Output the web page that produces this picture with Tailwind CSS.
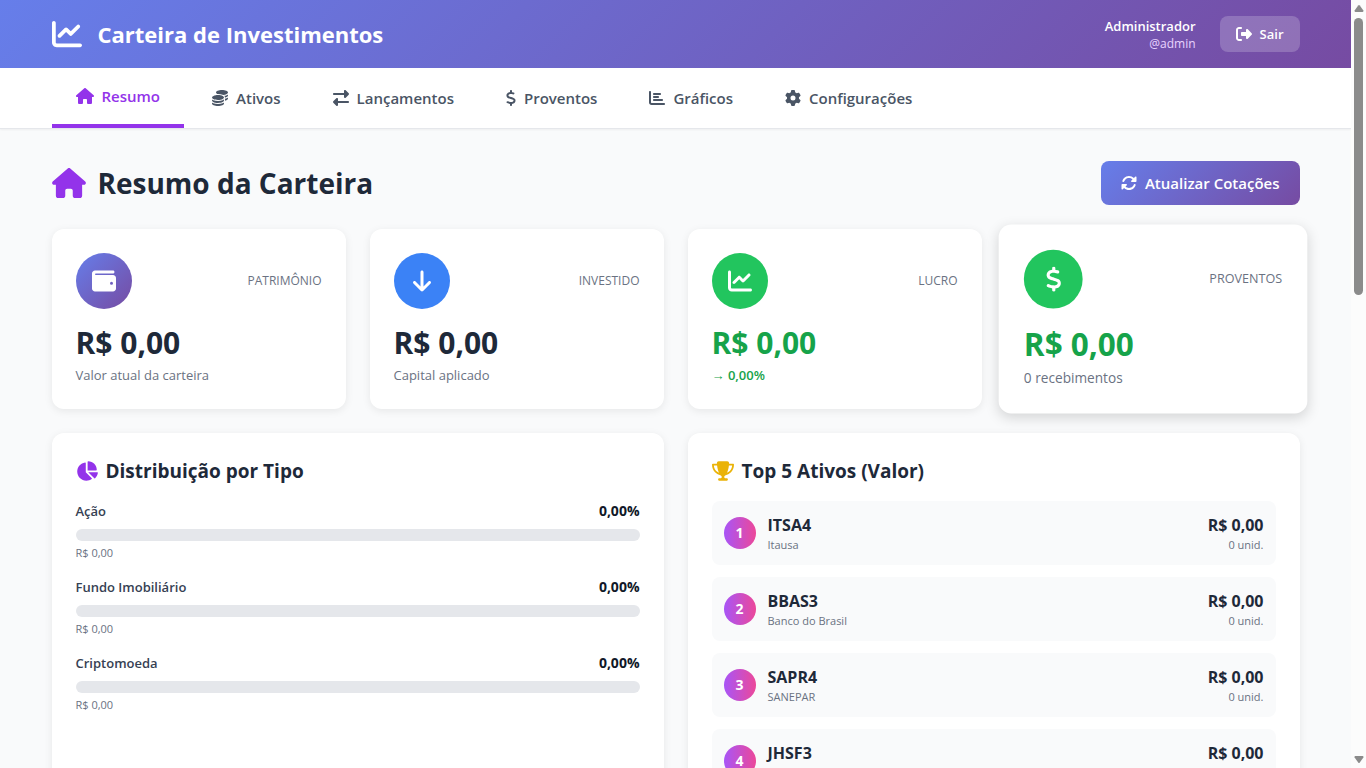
<!DOCTYPE html>
<html lang="pt-BR">
  <head>
    <meta charset="UTF-8" />
    <meta name="viewport" content="width=device-width, initial-scale=1.0" />
    <title>Carteira de Investimentos</title>
    <script src="https://cdn.jsdelivr.net/npm/@tailwindcss/browser@4"></script>
  </head>
  <body
    class="flex h-screen overflow-hidden bg-gray-50 font-['Open_Sans','Noto_Sans',sans-serif] text-[15px] leading-6 text-gray-800"
  >
    <!-- Shared icons -->
    <svg class="hidden" aria-hidden="true">
      <symbol id="icon-chart-line" viewBox="0 0 512 512">
        <path
          d="M64 64c0-17.7-14.3-32-32-32S0 46.3 0 64V400c0 44.2 35.8 80 80 80H480c17.7 0 32-14.3 32-32s-14.3-32-32-32H80c-8.8 0-16-7.2-16-16V64zm406.6 86.6c12.5-12.5 12.5-32.8 0-45.3s-32.8-12.5-45.3 0L320 210.7l-57.4-57.4c-12.5-12.5-32.8-12.5-45.3 0l-112 112c-12.5 12.5-12.5 32.8 0 45.3s32.8 12.5 45.3 0L240 221.3l57.4 57.4c12.5 12.5 32.8 12.5 45.3 0l128-128z"
        />
      </symbol>
      <symbol id="icon-home" viewBox="0 0 576 512">
        <path
          d="M575.8 255.5c0 18-15 32.1-32 32.1h-32l.7 160.2c0 2.7-.2 5.4-.5 8.1V472c0 22.1-17.9 40-40 40H456c-1.1 0-2.2 0-3.3-.1c-1.4 .1-2.8 .1-4.2 .1H416 392c-22.1 0-40-17.9-40-40V448 384c0-17.7-14.3-32-32-32H256c-17.7 0-32 14.3-32 32v64 24c0 22.1-17.9 40-40 40H160 128.1c-1.5 0-3-.1-4.5-.2c-1.2 .1-2.4 .2-3.6 .2H104c-22.1 0-40-17.9-40-40V360c0-.9 0-1.9 .1-2.8V287.6H32c-18 0-32-14-32-32.1c0-9 3-17 10-24L266.4 8c7-7 15-8 22-8s15 2 21 7L564.8 231.5c8 7 12 15 11 24z"
        />
      </symbol>
      <symbol id="icon-dollar" viewBox="0 0 320 512">
        <path
          d="M160 0c17.7 0 32 14.3 32 32V67.7c1.6 .2 3.1 .4 4.7 .7c.4 .1 .7 .1 1.1 .2l48 8.8c17.4 3.2 28.9 19.9 25.7 37.2s-19.9 28.9-37.2 25.7l-47.5-8.7c-31.3-4.6-58.9-1.5-78.3 6.2s-27.2 18.3-29 28.1c-2 10.7-.5 16.7 1.2 20.4c1.8 3.9 5.5 8.3 12.8 13.2c16.3 10.7 41.3 17.7 73.7 26.3l2.9 .8c28.6 7.6 63.6 16.8 89.6 33.8c14.2 9.3 27.6 21.9 35.9 39.5c8.5 17.9 10.3 37.9 6.4 59.2c-6.9 38-33.1 63.4-65.6 76.7c-13.7 5.6-28.6 9.2-44.4 11V480c0 17.7-14.3 32-32 32s-32-14.3-32-32V445.1c-.4-.1-.9-.1-1.3-.2l-.2 0 0 0c-24.4-3.8-64.5-14.3-91.5-26.3c-16.1-7.2-23.4-26.1-16.2-42.2s26.1-23.4 42.2-16.2c20.9 9.3 55.3 18.5 75.2 21.6c31.9 4.7 58.2 2 76-5.3c16.9-6.9 24.6-16.9 26.8-28.9c1.9-10.6 .4-16.7-1.3-20.4c-1.9-4-5.6-8.4-13-13.3c-16.4-10.7-41.5-17.7-74-26.3l-2.8-.7 0 0C119.4 279.3 84.4 270 58.4 253c-14.2-9.3-27.5-22-35.8-39.6c-8.4-17.9-10.1-37.9-6.1-59.2C23.7 116 52.3 91.2 84.8 78.3c13.3-5.3 27.9-8.9 43.2-11V32c0-17.7 14.3-32 32-32z"
        />
      </symbol>
    </svg>

    <div class="min-w-0 flex-1 overflow-y-auto [scrollbar-width:none]">
      <!-- Header -->
      <header class="bg-[linear-gradient(135deg,#667eea_0%,#764ba2_100%)] text-white">
        <div class="mx-auto flex max-w-7xl items-center justify-between px-4 py-4">
          <div class="flex items-center gap-4">
            <svg class="size-[30px]" fill="currentColor"><use href="#icon-chart-line" /></svg>
            <span class="text-[22px] font-bold">Carteira de Investimentos</span>
          </div>
          <div class="flex items-center gap-6">
            <div class="text-right">
              <p class="text-[13px] leading-5 font-semibold">Administrador</p>
              <p class="text-[12px] leading-4 text-purple-200">@admin</p>
            </div>
            <button
              type="button"
              class="flex items-center gap-2 rounded-lg bg-white/20 px-4 py-2 text-[13px] leading-5 font-semibold hover:bg-white/30"
            >
              <svg class="size-4" viewBox="0 0 512 512" fill="currentColor">
                <path
                  d="M377.9 105.9L500.7 228.7c7.2 7.2 11.3 17.1 11.3 27.3s-4.1 20.1-11.3 27.3L377.9 406.1c-6.4 6.4-15 9.9-24 9.9c-18.7 0-33.9-15.2-33.9-33.9l0-62.1-128 0c-17.7 0-32-14.3-32-32l0-64c0-17.7 14.3-32 32-32l128 0 0-62.1c0-18.7 15.2-33.9 33.9-33.9c9 0 17.6 3.6 24 9.9zM160 96L96 96c-17.7 0-32 14.3-32 32l0 256c0 17.7 14.3 32 32 32l64 0c17.7 0 32 14.3 32 32s-14.3 32-32 32l-64 0c-53 0-96-43-96-96L0 128C0 75 43 32 96 32l64 0c17.7 0 32 14.3 32 32s-14.3 32-32 32z"
                />
              </svg>
              Sair
            </button>
          </div>
        </div>
      </header>

      <!-- Navigation -->
      <nav class="border-b border-gray-200 bg-white shadow-[0_1px_2px_rgba(0,0,0,0.05)]">
        <div class="mx-auto flex max-w-7xl gap-1 px-4 font-semibold whitespace-nowrap text-gray-600">
          <button
            type="button"
            class="flex items-center gap-2 border-b-4 border-[#9333ea] px-6 py-4 text-[#9333ea]"
          >
            <svg class="h-4 w-[18px]" fill="currentColor"><use href="#icon-home" /></svg>
            Resumo
          </button>
          <button type="button" class="flex items-center gap-2 px-6 py-4 hover:text-[#9333ea]">
            <svg class="size-4" viewBox="0 0 512 512" fill="currentColor">
              <path
                d="M512 80c0 18-14.3 34.6-38.4 48c-29.1 16.1-72.5 27.5-122.3 30.9c-3.7-1.8-7.4-3.5-11.3-5C300.6 137.4 248.2 128 192 128c-8.3 0-16.4 .2-24.5 .6l-1.1-.6C142.3 114.6 128 98 128 80c0-44.2 86-80 192-80S512 35.8 512 80zM160.7 161.1c10.2-.7 20.7-1.1 31.3-1.1c62.2 0 117.4 12.3 152.5 31.4C369.3 204.9 384 221.7 384 240c0 4-.7 7.9-2.1 11.7c-4.6 13.2-17 25.3-35 35.5c0 0 0 0 0 0c-.1 .1-.3 .1-.4 .2c-.3 .2-.6 .3-.9 .5c-35 19.4-90.8 32-153.6 32c-59.6 0-112.9-11.3-148.2-29.1c-1.9-.9-3.7-1.9-5.5-2.9C14.3 274.6 0 258 0 240c0-34.8 53.4-64.5 128-75.4c10.5-1.5 21.4-2.7 32.7-3.5zM416 240c0-21.9-10.6-39.9-24.1-53.4c28.3-4.4 54.2-11.4 76.2-20.5c16.3-6.8 31.5-15.2 43.9-25.5V176c0 19.3-16.5 37.1-43.8 50.9c-14.6 7.4-32.4 13.7-52.4 18.5c.1-1.8 .2-3.5 .2-5.3zm-32 96c0 18-14.3 34.6-38.4 48c-1.8 1-3.6 1.9-5.5 2.9C304.9 404.7 251.6 416 192 416c-62.8 0-118.6-12.6-153.6-32C14.3 370.6 0 354 0 336V300.6c12.5 10.3 27.6 18.7 43.9 25.5C83.4 342.6 135.8 352 192 352s108.6-9.4 148.1-25.9c7.8-3.2 15.3-6.9 22.4-10.9c6.1-3.4 11.8-7.2 17.2-11.2c1.5-1.1 2.9-2.3 4.3-3.4V304v5.7V336zm32 0V304 278.1c19-4.2 36.5-9.5 52.1-16c16.3-6.8 31.5-15.2 43.9-25.5V272c0 10.5-5 21-14.9 30.9c-16.3 16.3-45 29.7-81.3 38.4c.1-1.7 .2-3.5 .2-5.3zM192 448c56.2 0 108.6-9.4 148.1-25.9c16.3-6.8 31.5-15.2 43.9-25.5V432c0 44.2-86 80-192 80S0 476.2 0 432V396.6c12.5 10.3 27.6 18.7 43.9 25.5C83.4 438.6 135.8 448 192 448z"
              />
            </svg>
            Ativos
          </button>
          <button type="button" class="flex items-center gap-2 px-6 py-4 hover:text-[#9333ea]">
            <svg class="size-4" viewBox="0 0 512 512" fill="currentColor">
              <path
                d="M32 96l320 0V32c0-12.9 7.8-24.6 19.8-29.6s25.7-2.2 34.9 6.9l96 96c6 6 9.4 14.1 9.4 22.6s-3.4 16.6-9.4 22.6l-96 96c-9.2 9.2-22.9 11.9-34.9 6.9s-19.8-16.6-19.8-29.6V160L32 160c-17.7 0-32-14.3-32-32s14.3-32 32-32zM480 352c17.7 0 32 14.3 32 32s-14.3 32-32 32H160v64c0 12.9-7.8 24.6-19.8 29.6s-25.7 2.2-34.9-6.9l-96-96c-6-6-9.4-14.1-9.4-22.6s3.4-16.6 9.4-22.6l96-96c9.2-9.2 22.9-11.9 34.9-6.9s19.8 16.6 19.8 29.6l0 64H480z"
              />
            </svg>
            Lançamentos
          </button>
          <button type="button" class="flex items-center gap-2 px-6 py-4 hover:text-[#9333ea]">
            <svg class="h-4 w-[10px]" fill="currentColor"><use href="#icon-dollar" /></svg>
            Proventos
          </button>
          <button type="button" class="flex items-center gap-2 px-6 py-4 hover:text-[#9333ea]">
            <svg class="size-4" viewBox="0 0 512 512" fill="currentColor">
              <path
                d="M32 32c17.7 0 32 14.3 32 32V400c0 8.8 7.2 16 16 16H480c17.7 0 32 14.3 32 32s-14.3 32-32 32H80c-44.2 0-80-35.8-80-80V64C0 46.3 14.3 32 32 32zm96 96c0-17.7 14.3-32 32-32l192 0c17.7 0 32 14.3 32 32s-14.3 32-32 32H160c-17.7 0-32-14.3-32-32zm32 64H288c17.7 0 32 14.3 32 32s-14.3 32-32 32H160c-17.7 0-32-14.3-32-32s14.3-32 32-32zm0 96H416c17.7 0 32 14.3 32 32s-14.3 32-32 32H160c-17.7 0-32-14.3-32-32s14.3-32 32-32z"
              />
            </svg>
            Gráficos
          </button>
          <button type="button" class="flex items-center gap-2 px-6 py-4 hover:text-[#9333ea]">
            <svg class="size-4" viewBox="0 0 512 512" fill="currentColor">
              <path
                d="M495.9 166.6c3.2 8.7 .5 18.4-6.4 24.6l-43.3 39.4c1.1 8.3 1.7 16.8 1.7 25.4s-.6 17.1-1.7 25.4l43.3 39.4c6.9 6.2 9.6 15.9 6.4 24.6c-4.4 11.9-9.7 23.3-15.8 34.3l-4.7 8.1c-6.6 11-14 21.4-22.1 31.2c-5.9 7.2-15.7 9.6-24.5 6.8l-55.7-17.7c-13.4 10.3-28.2 18.9-44 25.4l-12.5 57.1c-2 9.1-9 16.3-18.2 17.8c-13.8 2.3-28 3.5-42.5 3.5s-28.7-1.2-42.5-3.5c-9.2-1.5-16.2-8.7-18.2-17.8l-12.5-57.1c-15.8-6.5-30.6-15.1-44-25.4L83.1 425.9c-8.8 2.8-18.6 .3-24.5-6.8c-8.1-9.8-15.5-20.2-22.1-31.2l-4.7-8.1c-6.1-11-11.4-22.4-15.8-34.3c-3.2-8.7-.5-18.4 6.4-24.6l43.3-39.4C64.6 273.1 64 264.6 64 256s.6-17.1 1.7-25.4L22.4 191.2c-6.9-6.2-9.6-15.9-6.4-24.6c4.4-11.9 9.7-23.3 15.8-34.3l4.7-8.1c6.6-11 14-21.4 22.1-31.2c5.9-7.2 15.7-9.6 24.5-6.8l55.7 17.7c13.4-10.3 28.2-18.9 44-25.4l12.5-57.1c2-9.1 9-16.3 18.2-17.8C227.3 1.2 241.5 0 256 0s28.7 1.2 42.5 3.5c9.2 1.5 16.2 8.7 18.2 17.8l12.5 57.1c15.8 6.5 30.6 15.1 44 25.4l55.7-17.7c8.8-2.8 18.6-.3 24.5 6.8c8.1 9.8 15.5 20.2 22.1 31.2l4.7 8.1c6.1 11 11.4 22.4 15.8 34.3zM256 336a80 80 0 1 0 0-160 80 80 0 1 0 0 160z"
              />
            </svg>
            Configurações
          </button>
        </div>
      </nav>

      <main class="mx-auto max-w-7xl space-y-6 px-4 py-8">
        <div class="flex items-center justify-between">
          <h1 class="flex items-center gap-3 text-[28px] leading-9 font-bold">
            <svg class="h-[30px] w-[34px] text-[#9333ea]" fill="currentColor">
              <use href="#icon-home" />
            </svg>
            Resumo da Carteira
          </h1>
          <button
            type="button"
            class="flex items-center gap-2 rounded-lg bg-[linear-gradient(135deg,#667eea_0%,#764ba2_100%)] px-5 py-2.5 font-semibold text-white"
          >
            <svg class="size-4" viewBox="0 0 512 512" fill="currentColor">
              <path
                d="M142.9 142.9c62.2-62.2 162.7-62.5 225.3-1L327 183c-6.9 6.9-8.9 17.2-5.2 26.2s12.5 14.8 22.2 14.8H463.5c0 0 0 0 0 0H472c13.3 0 24-10.7 24-24V72c0-9.7-5.8-18.5-14.8-22.2s-19.3-1.7-26.2 5.2L413.4 96.6c-87.6-86.5-228.7-86.2-315.8 1C73.2 122 55.6 150.7 44.8 181.4c-5.9 16.7 2.9 34.9 19.5 40.8s34.9-2.9 40.8-19.5c7.7-21.8 20.2-42.3 37.8-59.8zM16 312v7.6 .7V440c0 9.7 5.8 18.5 14.8 22.2s19.3 1.7 26.2-5.2l41.6-41.6c87.6 86.5 228.7 86.2 315.8-1c24.4-24.4 42.1-53.1 52.9-83.7c5.9-16.7-2.9-34.9-19.5-40.8s-34.9 2.9-40.8 19.5c-7.7 21.8-20.2 42.3-37.8 59.8c-62.2 62.2-162.7 62.5-225.3 1L185 329c6.9-6.9 8.9-17.2 5.2-26.2s-12.5-14.8-22.2-14.8H48.4h-.7H40c-13.3 0-24 10.7-24 24z"
              />
            </svg>
            Atualizar Cotações
          </button>
        </div>

        <!-- Summary cards -->
        <div class="grid grid-cols-1 gap-6 md:grid-cols-2 lg:grid-cols-4">
          <div class="rounded-xl bg-white p-6 shadow-[0_2px_8px_rgba(0,0,0,0.08)]">
            <div class="mb-4 flex items-center justify-between">
              <div
                class="flex size-14 items-center justify-center rounded-full bg-[linear-gradient(135deg,#667eea_0%,#764ba2_100%)] text-white"
              >
                <svg class="size-6" viewBox="0 0 512 512" fill="currentColor">
                  <path
                    d="M64 32C28.7 32 0 60.7 0 96V416c0 35.3 28.7 64 64 64H448c35.3 0 64-28.7 64-64V192c0-35.3-28.7-64-64-64H80c-8.8 0-16-7.2-16-16s7.2-16 16-16H448c17.7 0 32-14.3 32-32s-14.3-32-32-32H64zM416 272a32 32 0 1 1 0 64 32 32 0 1 1 0-64z"
                  />
                </svg>
              </div>
              <span class="text-[12px] leading-4 font-medium text-gray-500 uppercase">Patrimônio</span>
            </div>
            <p class="text-[30px] leading-9 font-bold">R$ 0,00</p>
            <p class="mt-1 text-[13px] leading-5 text-gray-500">Valor atual da carteira</p>
          </div>

          <div class="rounded-xl bg-white p-6 shadow-[0_2px_8px_rgba(0,0,0,0.08)]">
            <div class="mb-4 flex items-center justify-between">
              <div class="flex size-14 items-center justify-center rounded-full bg-[#3b82f6] text-white">
                <svg class="h-6 w-[18px]" viewBox="0 0 384 512" fill="currentColor">
                  <path
                    d="M169.4 470.6c12.5 12.5 32.8 12.5 45.3 0l160-160c12.5-12.5 12.5-32.8 0-45.3s-32.8-12.5-45.3 0L224 370.8 224 64c0-17.7-14.3-32-32-32s-32 14.3-32 32l0 306.7L54.6 265.4c-12.5-12.5-32.8-12.5-45.3 0s-12.5 32.8 0 45.3l160 160z"
                  />
                </svg>
              </div>
              <span class="text-[12px] leading-4 font-medium text-gray-500 uppercase">Investido</span>
            </div>
            <p class="text-[30px] leading-9 font-bold">R$ 0,00</p>
            <p class="mt-1 text-[13px] leading-5 text-gray-500">Capital aplicado</p>
          </div>

          <div class="rounded-xl bg-white p-6 shadow-[0_2px_8px_rgba(0,0,0,0.08)]">
            <div class="mb-4 flex items-center justify-between">
              <div class="flex size-14 items-center justify-center rounded-full bg-[#22c55e] text-white">
                <svg class="size-6" fill="currentColor"><use href="#icon-chart-line" /></svg>
              </div>
              <span class="text-[12px] leading-4 font-medium text-gray-500 uppercase">Lucro</span>
            </div>
            <p class="text-[30px] leading-9 font-bold text-[#16a34a]">R$ 0,00</p>
            <p class="mt-1 text-[13px] leading-5 font-semibold text-[#16a34a]">→ 0,00%</p>
          </div>

          <!-- Raised card -->
          <div class="scale-105 rounded-xl bg-white p-6 shadow-[0_4px_12px_rgba(0,0,0,0.15)]">
            <div class="mb-4 flex items-center justify-between">
              <div class="flex size-14 items-center justify-center rounded-full bg-[#22c55e] text-white">
                <svg class="h-6 w-[15px]" fill="currentColor"><use href="#icon-dollar" /></svg>
              </div>
              <span class="text-[12px] leading-4 font-medium text-gray-500 uppercase">Proventos</span>
            </div>
            <p class="text-[30px] leading-9 font-bold text-[#16a34a]">R$ 0,00</p>
            <p class="mt-1 text-[13px] leading-5 text-gray-500">0 recebimentos</p>
          </div>
        </div>

        <div class="grid grid-cols-1 gap-6 lg:grid-cols-2">
          <!-- Distribution by type -->
          <section class="rounded-xl bg-white p-6 shadow-[0_2px_8px_rgba(0,0,0,0.08)]">
            <h2 class="mb-4 flex items-center gap-2 text-[19px] leading-7 font-bold">
              <svg class="h-5 w-[22px] text-[#9333ea]" viewBox="0 0 576 512" fill="currentColor">
                <path
                  d="M304 240V16.6c0-9 7-16.6 16-16.6C443.7 0 544 100.3 544 224c0 9-7.6 16-16.6 16H304zM32 272C32 150.7 122.1 50.3 239 34.3c9.2-1.3 17 6.1 17 15.4V288L412.5 444.5c6.7 6.7 6.2 17.7-1.5 23.1C371.8 495.6 323.8 512 272 512C139.5 512 32 404.6 32 272zm526.4 16c9.3 0 16.6 7.8 15.4 17c-7.7 55.9-34.6 105.6-73.9 142.3c-6 5.6-15.4 5.2-21.2-.7L320 288H558.4z"
                />
              </svg>
              Distribuição por Tipo
            </h2>
            <div class="space-y-4">
              <div>
                <div class="mb-2 flex justify-between leading-5">
                  <span class="text-[13px] font-semibold text-gray-700">Ação</span>
                  <span class="text-[14px] font-bold text-gray-900">0,00%</span>
                </div>
                <div class="h-3 overflow-hidden rounded-full bg-gray-200">
                  <div class="h-full bg-[#a855f7]" style="width: 0%"></div>
                </div>
                <p class="mt-1 text-[11px] leading-4 text-gray-500">R$ 0,00</p>
              </div>
              <div>
                <div class="mb-2 flex justify-between leading-5">
                  <span class="text-[13px] font-semibold text-gray-700">Fundo Imobiliário</span>
                  <span class="text-[14px] font-bold text-gray-900">0,00%</span>
                </div>
                <div class="h-3 overflow-hidden rounded-full bg-gray-200">
                  <div class="h-full bg-[#a855f7]" style="width: 0%"></div>
                </div>
                <p class="mt-1 text-[11px] leading-4 text-gray-500">R$ 0,00</p>
              </div>
              <div>
                <div class="mb-2 flex justify-between leading-5">
                  <span class="text-[13px] font-semibold text-gray-700">Criptomoeda</span>
                  <span class="text-[14px] font-bold text-gray-900">0,00%</span>
                </div>
                <div class="h-3 overflow-hidden rounded-full bg-gray-200">
                  <div class="h-full bg-[#a855f7]" style="width: 0%"></div>
                </div>
                <p class="mt-1 text-[11px] leading-4 text-gray-500">R$ 0,00</p>
              </div>
            </div>
          </section>

          <!-- Top assets -->
          <section class="rounded-xl bg-white p-6 shadow-[0_2px_8px_rgba(0,0,0,0.08)]">
            <h2 class="mb-4 flex items-center gap-2 text-[19px] leading-7 font-bold">
              <svg class="h-5 w-[22px] text-[#eab308]" viewBox="0 0 576 512" fill="currentColor">
                <path
                  d="M400 0H176c-26.5 0-48.1 21.8-47.1 48.2c.2 5.3 .4 10.6 .7 15.8H24C10.7 64 0 74.7 0 88c0 92.6 33.5 157 78.5 200.7c44.3 43.1 98.3 64.8 138.1 75.8c23.4 6.5 39.4 26 39.4 45.6c0 20.9-17 37.9-37.9 37.9H192c-17.7 0-32 14.3-32 32s14.3 32 32 32H384c17.7 0 32-14.3 32-32s-14.3-32-32-32H357.9C337 448 320 431 320 410.1c0-19.6 15.9-39.2 39.4-45.6c39.9-11 93.9-32.7 138.2-75.8C542.5 245 576 180.6 576 88c0-13.3-10.7-24-24-24H446.4c.3-5.2 .5-10.4 .7-15.8C448.1 21.8 426.5 0 400 0zM48.9 112h84.4c9.1 90.1 29.2 150.3 51.9 190.6c-24.9-11-50.8-26.5-73.2-48.3c-32-31.1-58-76-63-142.3zM464.1 254.3c-22.4 21.8-48.3 37.3-73.2 48.3c22.7-40.3 42.8-100.5 51.9-190.6h84.4c-5.1 66.3-31.1 111.2-63 142.3z"
                />
              </svg>
              Top 5 Ativos (Valor)
            </h2>
            <ol class="space-y-3">
              <li class="flex items-center gap-3 rounded-lg bg-gray-50 p-3">
                <span
                  class="flex size-8 items-center justify-center rounded-full bg-[linear-gradient(90deg,#a855f7,#ec4899)] text-[14px] font-bold text-white"
                  >1</span
                >
                <div class="flex-1">
                  <p class="text-[16px] font-bold">ITSA4</p>
                  <p class="text-[11px] leading-4 text-gray-500">Itausa</p>
                </div>
                <div class="text-right">
                  <p class="text-[16px] font-bold">R$ 0,00</p>
                  <p class="text-[11px] leading-4 text-gray-500">0 unid.</p>
                </div>
              </li>
              <li class="flex items-center gap-3 rounded-lg bg-gray-50 p-3">
                <span
                  class="flex size-8 items-center justify-center rounded-full bg-[linear-gradient(90deg,#a855f7,#ec4899)] text-[14px] font-bold text-white"
                  >2</span
                >
                <div class="flex-1">
                  <p class="text-[16px] font-bold">BBAS3</p>
                  <p class="text-[11px] leading-4 text-gray-500">Banco do Brasil</p>
                </div>
                <div class="text-right">
                  <p class="text-[16px] font-bold">R$ 0,00</p>
                  <p class="text-[11px] leading-4 text-gray-500">0 unid.</p>
                </div>
              </li>
              <li class="flex items-center gap-3 rounded-lg bg-gray-50 p-3">
                <span
                  class="flex size-8 items-center justify-center rounded-full bg-[linear-gradient(90deg,#a855f7,#ec4899)] text-[14px] font-bold text-white"
                  >3</span
                >
                <div class="flex-1">
                  <p class="text-[16px] font-bold">SAPR4</p>
                  <p class="text-[11px] leading-4 text-gray-500">SANEPAR</p>
                </div>
                <div class="text-right">
                  <p class="text-[16px] font-bold">R$ 0,00</p>
                  <p class="text-[11px] leading-4 text-gray-500">0 unid.</p>
                </div>
              </li>
              <li class="flex items-center gap-3 rounded-lg bg-gray-50 p-3">
                <span
                  class="flex size-8 items-center justify-center rounded-full bg-[linear-gradient(90deg,#a855f7,#ec4899)] text-[14px] font-bold text-white"
                  >4</span
                >
                <div class="flex-1">
                  <p class="text-[16px] font-bold">JHSF3</p>
                  <p class="text-[11px] leading-4 text-gray-500">JHSF</p>
                </div>
                <div class="text-right">
                  <p class="text-[16px] font-bold">R$ 0,00</p>
                  <p class="text-[11px] leading-4 text-gray-500">0 unid.</p>
                </div>
              </li>
            </ol>
          </section>
        </div>
      </main>
    </div>

    <!-- Scrollbar -->
    <div class="flex w-[15px] flex-col items-center bg-[#fcfcfc] py-1" aria-hidden="true">
      <svg class="h-2 w-[10px]" viewBox="0 0 10 8" fill="#8b8b8b">
        <path d="M4.2 1.5Q5 .5 5.8 1.5L9.4 6.6Q9.8 8 8.6 8H1.4Q.2 8 .6 6.6z" />
      </svg>
      <div class="mt-1.5 flex w-[9px] flex-1 flex-col">
        <div class="rounded-full bg-[#8b8b8b]" style="height: 37.6%"></div>
      </div>
      <svg class="h-2 w-[10px]" viewBox="0 0 10 8" fill="#8b8b8b">
        <path d="M4.2 6.5Q5 7.5 5.8 6.5L9.4 1.4Q9.8 0 8.6 0H1.4Q.2 0 .6 1.4z" />
      </svg>
    </div>
  </body>
</html>
